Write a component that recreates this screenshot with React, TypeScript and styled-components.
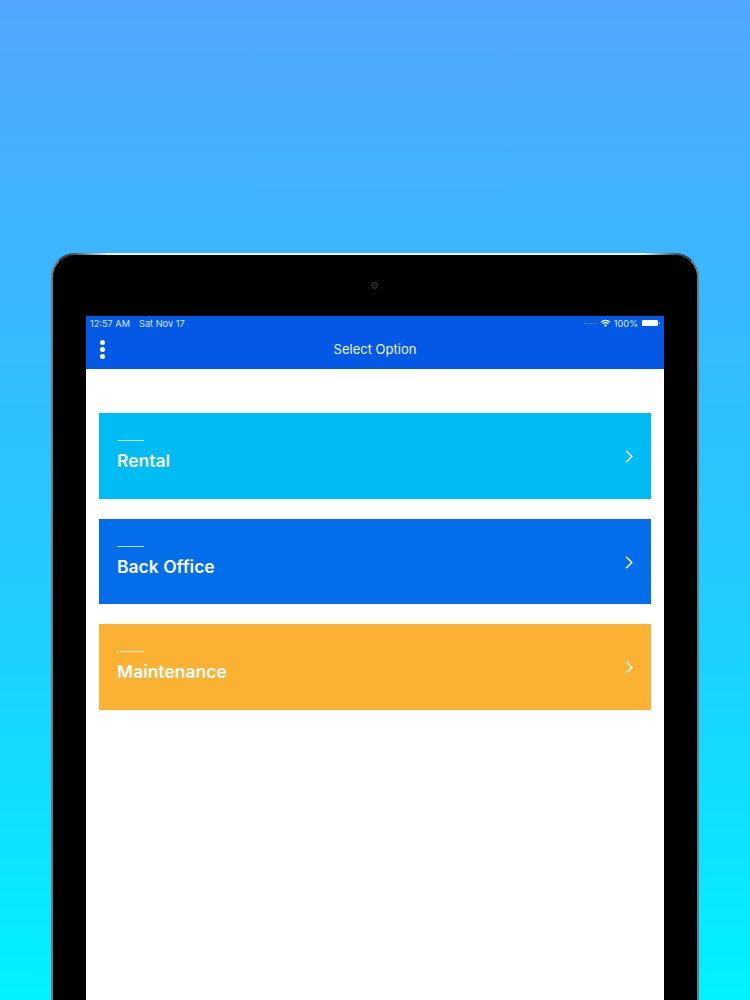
import React from "react";
import styled, { createGlobalStyle } from "styled-components";

const Global = createGlobalStyle`
  html, body { margin: 0; padding: 0; }
  body { font-family: Inter, "Liberation Sans", sans-serif; }
`;

const Page = styled.div`
  box-sizing: border-box;
  width: 750px;
  height: 1000px;
  overflow: hidden;
  padding: 253px 51px 0;
  background: linear-gradient(180deg, #52a6ff 0%, #38b8ff 30%, #1cd0ff 65%, #00f2ff 100%);
`;

const Device = styled.div`
  box-sizing: border-box;
  position: relative;
  width: 648px;
  height: 760px;
  padding: 61px 33px 0;
  background: #000;
  border: 2px solid #6f7a82;
  border-top-color: #3c4247;
  border-bottom: 0;
  border-radius: 24px 24px 0 0;
  display: flex;
  flex-direction: column;
  align-items: center;
  &::before {
    content: "";
    position: absolute;
    top: -2px;
    left: 18px;
    right: 18px;
    height: 2px;
    background: linear-gradient(90deg, transparent 0%, #e8f1f5 6%, #e8f1f5 94%, transparent 100%);
  }
`;

const Camera = styled.span`
  position: absolute;
  top: 27px;
  left: 317.5px;
  box-sizing: border-box;
  width: 7px;
  height: 7px;
  border-radius: 50%;
  background: #15181b;
  border: 1px solid #2f3438;
`;

const Screen = styled.div`
  width: 578px;
  flex: 1;
  background: #fff;
  display: flex;
  flex-direction: column;
`;

const Header = styled.header`
  height: 53px;
  background: #0358e6;
  color: #fff;
  display: flex;
  flex-direction: column;
`;

const StatusBar = styled.div`
  height: 14px;
  padding: 0 4px;
  display: flex;
  align-items: center;
  justify-content: space-between;
  font-size: 9.2px;
  color: #d8e6ff;
  white-space: nowrap;
`;

const StatusGroup = styled.div`
  display: flex;
  align-items: center;
  gap: 3px;
`;

const DateText = styled.span`
  margin-left: 6px;
`;

const Signal = styled.span`
  margin-right: 1px;
  width: 12px;
  border-top: 1px dotted #6f9df0;
`;

const Battery = styled.span`
  position: relative;
  width: 16px;
  height: 6px;
  margin: 0 2px 0 1px;
  background: #fff;
  border-radius: 1px;
  &::after {
    content: "";
    position: absolute;
    right: -2px;
    top: 2px;
    width: 1px;
    height: 2px;
    background: #9dbdf5;
  }
`;

const NavBar = styled.div`
  flex: 1;
  position: relative;
  display: flex;
  align-items: center;
  justify-content: center;
  padding-bottom: 1px;
  font-size: 13px;
  font-weight: 400;
  color: #eef4ff;
`;

const MenuDots = styled.span`
  position: absolute;
  left: 14px;
  top: 10px;
  display: flex;
  flex-direction: column;
  gap: 2px;
  i {
    width: 5px;
    height: 5px;
    border-radius: 50%;
    background: #fff;
  }
`;

const List = styled.div`
  padding: 44px 13.4px 0 13px;
  display: flex;
  flex-direction: column;
  gap: 20px;
`;

const Card = styled.div<{ $color: string }>`
  box-sizing: border-box;
  height: 85.7px;
  padding: 27px 18px 0;
  background: ${(p) => p.$color};
  color: #fff;
  position: relative;
`;

const Rule = styled.div`
  width: 27px;
  height: 1px;
  background: rgba(255, 255, 255, 0.75);
  margin-bottom: 10px;
`;

const Title = styled.div`
  font-size: 17.5px;
  line-height: 20px;
  font-weight: 600;
  color: #f6fcff;
`;

const Chevron = styled.svg`
  position: absolute;
  right: 17px;
  top: 36px;
  width: 10px;
  height: 15px;
`;

const cards = [
  { title: "Rental", color: "#01bbf3" },
  { title: "Back Office", color: "#046dea" },
  { title: "Maintenance", color: "#fbb232" },
];

export default function App() {
  return (
    <Page>
      <Global />
      <Device>
        <Camera />
        <Screen>
          <Header>
            <StatusBar>
              <StatusGroup>
                <span>12:57 AM</span>
                <DateText>Sat Nov 17</DateText>
              </StatusGroup>
              <StatusGroup>
                <Signal />
                <svg width="11" height="9" viewBox="0 0 12 10" aria-hidden="true">
                  <path d="M1 3.6a7 7 0 0 1 10 0M2.8 5.4a4.5 4.5 0 0 1 6.4 0" fill="none" stroke="#fff" strokeWidth="1.3" />
                  <path d="M4.4 7a2.3 2.3 0 0 1 3.2 0L6 8.9Z" fill="#fff" />
                </svg>
                <span>100%</span>
                <Battery />
              </StatusGroup>
            </StatusBar>
            <NavBar>
              <MenuDots>
                <i />
                <i />
                <i />
              </MenuDots>
              Select Option
            </NavBar>
          </Header>
          <List>
            {cards.map((c) => (
              <Card key={c.title} $color={c.color}>
                <Rule />
                <Title>{c.title}</Title>
                <Chevron viewBox="0 0 10 15" aria-hidden="true">
                  <path d="M2 1.8 7.8 7.5 2 13.2" fill="none" stroke="#fff" strokeWidth="1.5" />
                </Chevron>
              </Card>
            ))}
          </List>
        </Screen>
      </Device>
    </Page>
  );
}
